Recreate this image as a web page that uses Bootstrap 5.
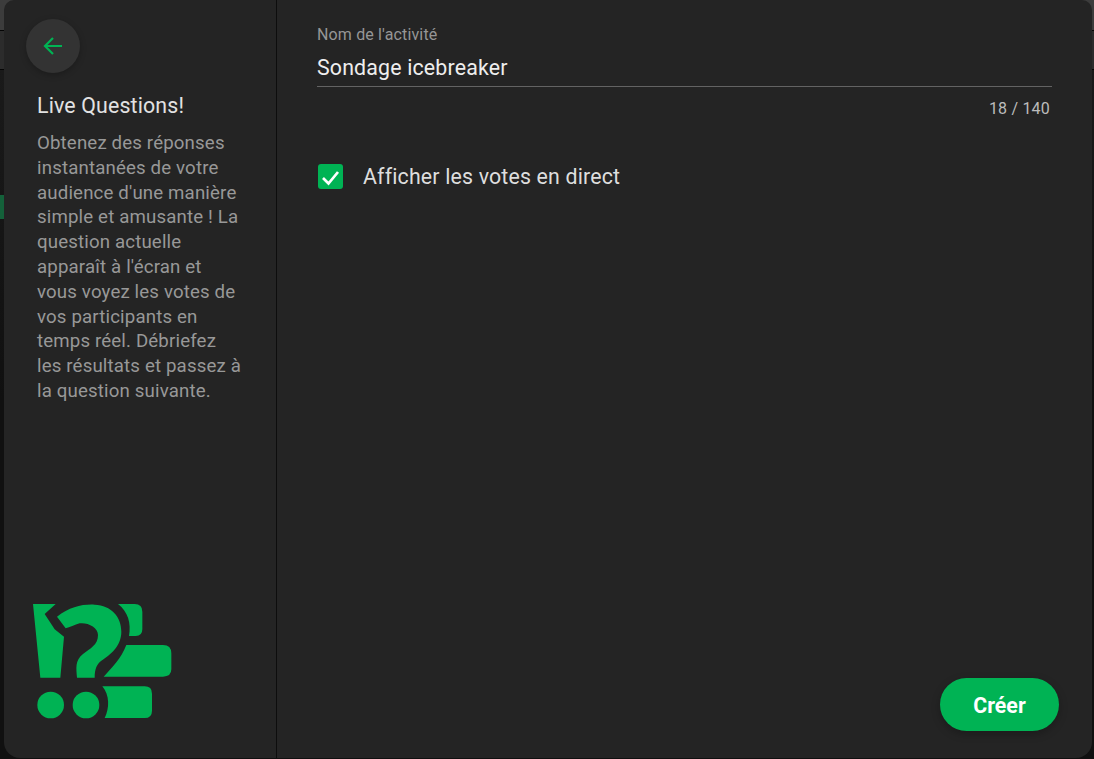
<!DOCTYPE html>
<html lang="fr"><head><meta charset="utf-8">
<link rel="stylesheet" href="https://cdn.jsdelivr.net/npm/bootstrap@5.3.0/dist/css/bootstrap.min.css">
<style>
html,body{height:100%;margin:0;background:#111;overflow:hidden}
body{font-family:Roboto,"Liberation Sans",sans-serif}
.backdrop{position:relative;height:759px;padding:0 2px 1px 4px;background:linear-gradient(#3c3c3c 0 30px,#050505 30px 31px,#2c2c2c 31px 69px,#050505 69px 70px,#1a1a1a 70px,#101010 400px)}
.peek{position:absolute;left:0;top:195px;width:4px;height:24px;background:#14613a}
.sheet{position:relative;height:758px;background:#242424;border-radius:10px 10px 16px 16px}
.side{width:273px;border-right:1px solid #0d0d0d;padding:19px 0 0 22px}
.back{width:54px;height:54px;border-radius:50%;background:#333;border:0;box-shadow:0 2px 6px rgba(0,0,0,.25);padding:0}
.side-title{font-size:21.33px;font-weight:400;line-height:26px;color:#e2e2e2;margin:20px 0 0 11px;letter-spacing:.15px}
.side-text{font-size:18.67px;line-height:24.8px;color:#989898;margin:12px 0 0 11px;width:208px;letter-spacing:.15px}
.logo{display:block;margin:auto 0 38px 7px}
.main{padding:25px 40px 27px 40px}
.fld-label{font-size:16px;line-height:20px;color:#969696;margin:0;letter-spacing:.15px}
.fld-input{background:none;border:0;border-bottom:1px solid #636363;color:#eee;font-size:21.33px;line-height:24px;padding:11px 0 6px;width:100%;outline:0;letter-spacing:.17px}
.fld-count{font-size:16px;line-height:20px;color:#bcbcbc;text-align:right;padding:12px 2px 0 0;letter-spacing:.2px}
.vote-row{margin-top:45px;gap:20px;padding-left:1px}
.tick{width:25px;height:25px;border-radius:3px;background:#00b354;flex:none;margin-top:-2px}
.vote-label{font-size:21.33px;line-height:26px;color:#dedede;letter-spacing:.17px}
.go{background:#00b354;color:#fff;border:0;border-radius:27px;width:119px;height:53px;font-size:21.33px;font-weight:700;padding:8px 0 6px;margin-right:-7px;box-shadow:0 3px 8px rgba(0,0,0,.25)}
.go:hover{background:#00b354;color:#fff}
</style></head><body>
<div class="backdrop">
<span class="peek"></span>
<div class="sheet d-flex">
<aside class="side d-flex flex-column flex-shrink-0">
<button class="back d-flex align-items-center justify-content-center" aria-label="Retour">
<svg width="22" height="22" viewBox="0 0 22 22" fill="none" stroke="#00b354" stroke-width="2.2"><path d="M20 11H3M11 3l-8 8 8 8"/></svg>
</button>
<h1 class="side-title">Live Questions!</h1>
<p class="side-text">Obtenez des réponses instantanées de votre audience d'une manière simple et amusante ! La question actuelle apparaît à l'écran et vous voyez les votes de vos participants en temps réel. Débriefez les résultats et passez à la question suivante.</p>
<svg class="logo" width="140" height="116" viewBox="40 42 420 348" fill="#00b354">
<path d="M40 42H108L75 72 105 118 133 140 122 263H62Z"/>
<path d="M112 80C150 50 190 42 225 44 275 46 305 80 305 125 305 170 270 195 245 212 232 222 225 235 225 263H172C170 235 165 212 190 192 212 175 235 165 235 135 235 112 205 97 180 100 165 105 150 112 138 115Z"/>
<path d="M295 42H345Q368 42 368 65V118Q368 138 348 138H328C335 100 325 65 295 42Z"/>
<path d="M320 165H430Q455 165 455 190V238Q455 260 430 260H252C275 235 305 205 320 165Z"/>
<path d="M248 289H375Q397 289 397 311V362Q397 384 375 384H255C270 355 270 315 248 289Z"/>
<circle cx="93" cy="345" r="40"/><circle cx="199" cy="345" r="40"/>
</svg>
</aside>
<main class="main flex-grow-1 d-flex flex-column">
<label class="fld-label" for="nom">Nom de l'activité</label>
<input class="fld-input" id="nom" value="Sondage icebreaker">
<div class="fld-count">18 / 140</div>
<div class="vote-row d-flex align-items-center">
<span class="tick d-flex align-items-center justify-content-center"><svg width="25" height="25" viewBox="0 0 25 25" fill="none" stroke="#fff" stroke-width="2.7"><path d="M5 14l5.5 5.5L20 8"/></svg></span>
<span class="vote-label">Afficher les votes en direct</span>
</div>
<div class="mt-auto d-flex justify-content-end"><button class="btn go">Créer</button></div>
</main>
</div>
</div>
</body></html>
